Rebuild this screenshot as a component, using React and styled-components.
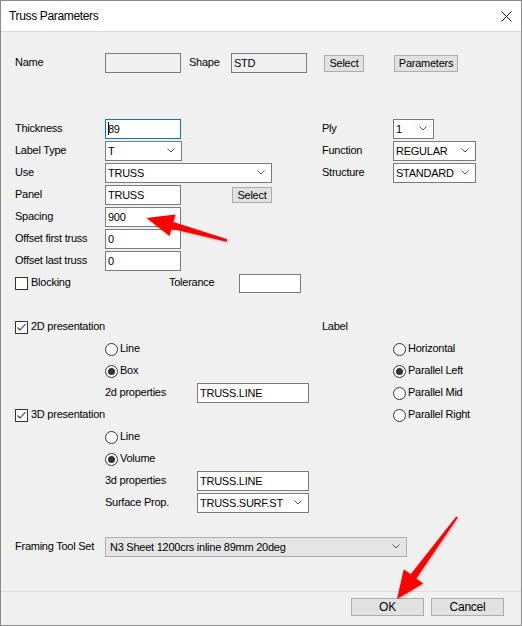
import React from 'react';
import styled, { createGlobalStyle } from 'styled-components';

const GlobalStyle = createGlobalStyle`
  html, body {
    margin: 0;
    padding: 0;
    background: #fff;
  }
  body {
    font-family: "Liberation Sans", Arial, sans-serif;
    font-size: 11px;
    letter-spacing: -0.25px;
    color: #000;
  }
  * {
    box-sizing: border-box;
  }
`;

const Window = styled.div`
  position: relative;
  width: 522px;
  height: 626px;
  border: 1px solid #8a8a8a;
  background: #f0f0f0;
  display: flex;
  flex-direction: column;
`;

const TitleBar = styled.div`
  height: 31px;
  flex-shrink: 0;
  background: #fff;
  border-bottom: 1px solid #dadada;
  display: flex;
  align-items: center;
  justify-content: space-between;
  padding: 0 9px 0 8px;
`;

const Title = styled.span`
  font-size: 12px;
  letter-spacing: -0.35px;
`;

const Content = styled.div`
  flex: 1;
  padding: 20px 0 0 14px;
  display: flex;
  flex-direction: column;
`;

const Section = styled.div`
  display: flex;
  margin-top: ${p => p.$gap || 0}px;
`;

const Column = styled.div`
  display: flex;
  flex-direction: column;
  width: ${p => (p.$w ? `${p.$w}px` : 'auto')};
  flex-shrink: 0;
`;

const Row = styled.div`
  display: flex;
  align-items: center;
  height: 22px;
  padding-left: ${p => p.$indent || 0}px;
  margin-top: ${p => p.$gap || 0}px;
`;

const Label = styled.span`
  width: ${p => (p.$w ? `${p.$w}px` : 'auto')};
  margin-left: ${p => p.$ml || 0}px;
  padding-bottom: 2px;
  flex-shrink: 0;
  white-space: nowrap;
`;

const TextBox = styled.div`
  width: ${p => p.$w}px;
  height: ${p => p.$h || 20}px;
  margin-left: ${p => p.$ml || 0}px;
  flex-shrink: 0;
  border: 1px solid ${p => (p.$focus ? '#0078d7' : '#7a7a7a')};
  background: ${p => (p.$readOnly ? '#f0f0f0' : '#fff')};
  padding: 0 2px 1px;
  display: flex;
  align-items: center;
  white-space: nowrap;
  overflow: hidden;
`;

const Caret = styled.span`
  display: inline-block;
  width: 1px;
  height: 13px;
  background: #000;
  margin-right: -1px;
`;

const Combo = styled.div`
  width: ${p => p.$w}px;
  height: 20px;
  flex-shrink: 0;
  border: 1px solid ${p => (p.$flat ? '#adadad' : '#7a7a7a')};
  background: ${p => (p.$flat ? '#e5e5e5' : '#fff')};
  padding: 0 6px 1px ${p => (p.$flat ? 4 : 2)}px;
  display: flex;
  align-items: center;
  justify-content: space-between;
  white-space: nowrap;
`;

const Button = styled.button`
  width: ${p => p.$w}px;
  height: ${p => p.$h || 17}px;
  margin-left: ${p => p.$ml || 0}px;
  flex-shrink: 0;
  background: #e1e1e1;
  border: 1px solid #adadad;
  border-radius: 0;
  padding: 0 0 1px;
  font-family: inherit;
  font-size: ${p => p.$fs || 11}px;
  letter-spacing: inherit;
  color: #000;
`;

const CheckItem = styled.label`
  display: flex;
  align-items: center;
  width: ${p => (p.$w ? `${p.$w}px` : 'auto')};
  flex-shrink: 0;
`;

const CheckBox = styled.span`
  width: 13px;
  height: 13px;
  margin-right: 3px;
  border: 1px solid #333;
  background: #fff;
  display: inline-flex;
  align-items: center;
  justify-content: center;
  flex-shrink: 0;
`;

const RadioCircle = styled.span`
  width: 13px;
  height: 13px;
  margin-right: 2px;
  border-radius: 50%;
  border: 1px solid #333;
  background: #fff;
  display: inline-flex;
  align-items: center;
  justify-content: center;
  flex-shrink: 0;

  &::after {
    content: '';
    width: 7px;
    height: 7px;
    border-radius: 50%;
    background: ${p => (p.$checked ? '#333' : 'transparent')};
  }
`;

const ItemText = styled.span`
  padding-bottom: 2px;
  white-space: nowrap;
`;

const Footer = styled.div`
  height: 34px;
  flex-shrink: 0;
  border-top: 1px solid #dfdfdf;
  display: flex;
  justify-content: flex-end;
  align-items: flex-start;
  gap: 7px;
  padding: 6px 17px 0 0;
`;

const Overlay = styled.svg`
  position: absolute;
  left: -1px;
  top: -1px;
  width: 522px;
  height: 626px;
  pointer-events: none;
  filter: drop-shadow(1px 1px 1px rgba(0, 0, 0, 0.25));
`;

const Chevron = () => (
  <svg width="8" height="5" viewBox="0 0 8 5">
    <polyline points="0.5,0.5 4,4 7.5,0.5" fill="none" stroke="#555" strokeWidth="1" />
  </svg>
);

const CloseIcon = () => (
  <svg width="11" height="11" viewBox="0 0 11 11">
    <path d="M0.5 0.5 L10.5 10.5 M10.5 0.5 L0.5 10.5" stroke="#111" strokeWidth="1" />
  </svg>
);

const Check = ({ checked, label, w }) => (
  <CheckItem $w={w}>
    <CheckBox>
      {checked && (
        <svg width="11" height="11" viewBox="0 0 11 11">
          <polyline points="1.5,5.5 4,8 9.5,2" fill="none" stroke="#333" strokeWidth="1.1" />
        </svg>
      )}
    </CheckBox>
    <ItemText>{label}</ItemText>
  </CheckItem>
);

const Radio = ({ checked, label, indent }) => (
  <Row $indent={indent}>
    <RadioCircle $checked={checked} />
    <ItemText>{label}</ItemText>
  </Row>
);

const Select = ({ w, value, flat }) => (
  <Combo $w={w} $flat={flat}>
    <span>{value}</span>
    <Chevron />
  </Combo>
);

const App = () => (
  <>
    <GlobalStyle />
    <Window>
      <TitleBar>
        <Title>Truss Parameters</Title>
        <CloseIcon />
      </TitleBar>

      <Content>
        <Row>
          <Label $w={90}>Name</Label>
          <TextBox $w={76} $readOnly />
          <Label $w={42} $ml={8}>Shape</Label>
          <TextBox $w={76} $readOnly>STD</TextBox>
          <Button $w={40} $ml={17}>Select</Button>
          <Button $w={64} $ml={30}>Parameters</Button>
        </Row>

        <Section $gap={44}>
          <Column $w={307}>
            <Row>
              <Label $w={90}>Thickness</Label>
              <TextBox $w={76} $focus><Caret />89</TextBox>
            </Row>
            <Row>
              <Label $w={90}>Label Type</Label>
              <Select w={77} value="T" />
            </Row>
            <Row>
              <Label $w={90}>Use</Label>
              <Select w={167} value="TRUSS" />
            </Row>
            <Row>
              <Label $w={90}>Panel</Label>
              <TextBox $w={76}>TRUSS</TextBox>
              <Button $w={40} $h={16} $ml={51}>Select</Button>
            </Row>
            <Row>
              <Label $w={90}>Spacing</Label>
              <TextBox $w={76}>900</TextBox>
            </Row>
            <Row>
              <Label $w={90}>Offset first truss</Label>
              <TextBox $w={76}>0</TextBox>
            </Row>
            <Row>
              <Label $w={90}>Offset last truss</Label>
              <TextBox $w={76}>0</TextBox>
            </Row>
            <Row>
              <Check w={154} label="Blocking" />
              <Label $w={70}>Tolerance</Label>
              <TextBox $w={62} $h={19} />
            </Row>
          </Column>
          <Column>
            <Row>
              <Label $w={71}>Ply</Label>
              <Select w={41} value="1" />
            </Row>
            <Row>
              <Label $w={71}>Function</Label>
              <Select w={83} value="REGULAR" />
            </Row>
            <Row>
              <Label $w={71}>Structure</Label>
              <Select w={83} value="STANDARD" />
            </Row>
          </Column>
        </Section>

        <Section $gap={22}>
          <Column $w={307}>
            <Row>
              <Check checked label="2D presentation" />
            </Row>
            <Radio indent={90} label="Line" />
            <Radio indent={90} label="Box" checked />
            <Row $indent={90}>
              <Label $w={92}>2d properties</Label>
              <TextBox $w={112}>TRUSS.LINE</TextBox>
            </Row>
            <Row>
              <Check checked label="3D presentation" />
            </Row>
            <Radio indent={90} label="Line" />
            <Radio indent={90} label="Volume" checked />
            <Row $indent={90}>
              <Label $w={92}>3d properties</Label>
              <TextBox $w={112}>TRUSS.LINE</TextBox>
            </Row>
            <Row $indent={90}>
              <Label $w={92}>Surface Prop.</Label>
              <Select w={112} value="TRUSS.SURF.ST" />
            </Row>
          </Column>
          <Column>
            <Row>
              <Label>Label</Label>
            </Row>
            <Radio indent={71} label="Horizontal" />
            <Radio indent={71} label="Parallel Left" checked />
            <Radio indent={71} label="Parallel Mid" />
            <Radio indent={71} label="Parallel Right" />
          </Column>
        </Section>

        <Row $gap={22}>
          <Label $w={90}>Framing Tool Set</Label>
          <Select w={302} value="N3 Sheet 1200crs inline 89mm 20deg" flat />
        </Row>
      </Content>

      <Footer>
        <Button $w={73} $h={18} $fs={12}>OK</Button>
        <Button $w={73} $h={18} $fs={12}>Cancel</Button>
      </Footer>

      <Overlay viewBox="0 0 522 626">
        <polygon
          fill="#f00"
          points="146.5,218 175.5,214.5 173.4,221.9 227.3,239.3 226.7,241.7 171.6,228.7 169.5,236"
        />
        <polygon
          fill="#f00"
          points="397,599 403.8,569.2 410.7,574.2 456.2,516.4 457.8,517.6 416.3,578.4 423.2,583.4"
        />
      </Overlay>
    </Window>
  </>
);

export default App;
